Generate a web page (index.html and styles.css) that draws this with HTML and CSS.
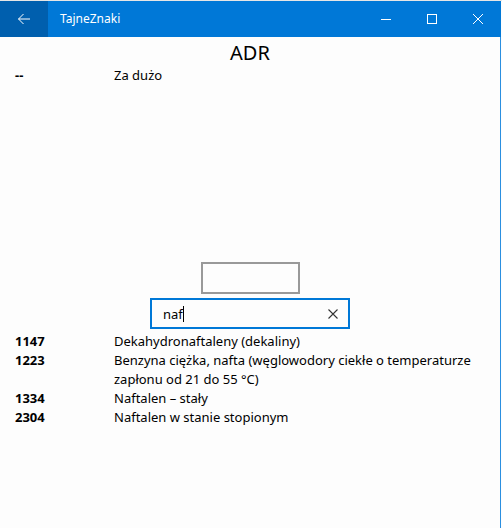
FILE: index.html
```html
<!DOCTYPE html>
<html lang="pl">
<head>
<meta charset="utf-8">
<title>TajneZnaki</title>
<link rel="stylesheet" href="styles.css">
</head>
<body>
<div class="window">
  <header class="titlebar">
    <div class="back">
      <svg width="14" height="12" viewBox="0 0 14 12"><path d="M13 6H1.5M6.5 1L1.5 6l5 5" fill="none" stroke="#fff" stroke-width="1"/></svg>
    </div>
    <div class="apptitle">TajneZnaki</div>
    <div class="controls">
      <div class="ctl"><svg width="10" height="10" viewBox="0 0 10 10"><path d="M0 5.5h10" stroke="#fff" stroke-width="1"/></svg></div>
      <div class="ctl"><svg width="10" height="10" viewBox="0 0 10 10"><rect x="0.5" y="0.5" width="9" height="9" fill="none" stroke="#fff" stroke-width="1"/></svg></div>
      <div class="ctl"><svg width="10" height="10" viewBox="0 0 10 10"><path d="M0 0L10 10M10 0L0 10" stroke="#fff" stroke-width="1"/></svg></div>
    </div>
  </header>
  <main class="content">
    <h1 class="heading">ADR</h1>
    <div class="toplist">
      <div class="row"><span class="code">--</span><span class="desc">Za dużo</span></div>
    </div>
    <div class="emptybox"></div>
    <div class="search">
      <span class="query">naf</span><span class="caret"></span>
      <svg class="clear" width="10" height="10" viewBox="0 0 10 10"><path d="M0.5 0.5L9.5 9.5M9.5 0.5L0.5 9.5" stroke="#333" stroke-width="1.1"/></svg>
    </div>
    <div class="results">
      <div class="row"><span class="code">1147</span><span class="desc">Dekahydronaftaleny (dekaliny)</span></div>
      <div class="row"><span class="code">1223</span><span class="desc">Benzyna ciężka, nafta (węglowodory ciekłe o temperaturze zapłonu od 21 do 55 °C)</span></div>
      <div class="row"><span class="code">1334</span><span class="desc">Naftalen – stały</span></div>
      <div class="row"><span class="code">2304</span><span class="desc">Naftalen w stanie stopionym</span></div>
    </div>
  </main>
</div>
</body>
</html>
```
FILE: styles.css
```css
html, body {
  margin: 0;
  padding: 0;
  background: #fdfdfd;
}
body {
  font-family: "Noto Sans", "Open Sans", sans-serif;
  color: #000;
}
.window {
  width: 502px;
  height: 528px;
  box-sizing: border-box;
  border-top: 1px solid #e6e6e6;
  display: flex;
  flex-direction: column;
  overflow: hidden;
}
.titlebar {
  height: 36px;
  background: #0078d7;
  display: flex;
  align-items: center;
  color: #fff;
  margin-right: 1px;
}
.back {
  width: 48px;
  height: 36px;
  background: #005fae;
  display: flex;
  align-items: center;
  justify-content: center;
}
.apptitle {
  margin-left: 12px;
  font-size: 12px;
  flex: 1;
  padding-bottom: 1px;
}
.controls {
  display: flex;
  height: 36px;
}
.ctl {
  width: 46px;
  display: flex;
  align-items: center;
  justify-content: center;
}
.content {
  flex: 1;
  display: flex;
  flex-direction: column;
  border-right: 1px solid #2b8fe0;
  margin-right: 1px;
  background: #fdfdfd;
}
.heading {
  margin: 3px 0 0;
  font-size: 20px;
  font-weight: normal;
  text-align: center;
  line-height: 26px;
}
.toplist {
  height: 196px;
}
.row {
  display: grid;
  grid-template-columns: 99px 365px;
  padding-left: 15px;
  font-size: 13px;
  line-height: 19px;
}
.code {
  font-weight: bold;
}
.emptybox {
  align-self: center;
  width: 95px;
  height: 28px;
  border: 2px solid #999;
  margin-left: 1px;
}
.search {
  align-self: center;
  margin-top: 4px;
  width: 185px;
  height: 27px;
  border: 2px solid #0078d7;
  display: flex;
  align-items: center;
  padding-left: 11px;
  box-sizing: content-box;
  position: relative;
  font-size: 13px;
}
.caret {
  width: 1px;
  height: 16px;
  background: #000;
}
.clear {
  position: absolute;
  right: 10px;
  top: 9px;
}
.results {
  margin-top: 3px;
}
```
